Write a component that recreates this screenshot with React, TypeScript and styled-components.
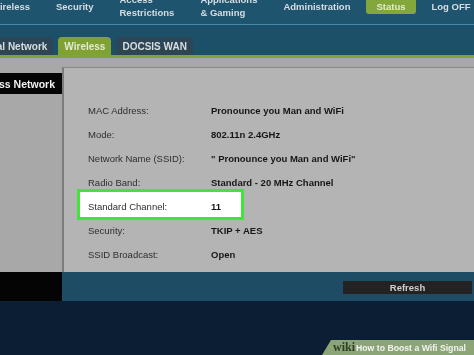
import styled, { createGlobalStyle } from "styled-components";

const GlobalStyle = createGlobalStyle`
  html, body {
    margin: 0;
    padding: 0;
    background: #0d1f34;
  }
  body {
    font-family: "Liberation Sans", Arial, sans-serif;
  }
`;

type NavItem = { lines: string[]; active?: boolean };

const navItems: NavItem[] = [
  { lines: ["Wireless"] },
  { lines: ["Security"] },
  { lines: ["Access", "Restrictions"] },
  { lines: ["Applications", "& Gaming"] },
  { lines: ["Administration"] },
  { lines: ["Status"], active: true },
  { lines: ["Log OFF"] },
];

const tabs = [
  { label: "Local Network" },
  { label: "Wireless", active: true },
  { label: "DOCSIS WAN" },
];

const rows = [
  { label: "MAC Address:", value: "Pronounce you Man and WiFi" },
  { label: "Mode:", value: "802.11n 2.4GHz" },
  { label: "Network Name (SSID):", value: "\" Pronounce you Man and WiFi\"" },
  { label: "Radio Band:", value: "Standard - 20 MHz Channel" },
  { label: "Standard Channel:", value: "11", highlight: true },
  { label: "Security:", value: "TKIP + AES" },
  { label: "SSID Broadcast:", value: "Open" },
];

export default function App() {
  return (
    <>
      <GlobalStyle />
      <Screen>
        <Header>
          <NavBar>
            <NavList>
              {navItems.map((item) => (
                <NavLink key={item.lines.join()} $active={item.active}>
                  {item.lines.map((l) => (
                    <span key={l}>{l}</span>
                  ))}
                </NavLink>
              ))}
            </NavList>
          </NavBar>
          <TabRow>
            {tabs.map((t) => (
              <Tab key={t.label} $active={t.active}>
                {t.label}
              </Tab>
            ))}
          </TabRow>
        </Header>
        <GreenRule />
        <Body>
          <Sidebar>
            <SideLabel>
              <span>Wireless Network</span>
            </SideLabel>
          </Sidebar>
          <Panel>
            {rows.map((r) =>
              r.highlight ? (
                <HighlightRow key={r.label}>
                  <Label>{r.label}</Label>
                  <Value>{r.value}</Value>
                </HighlightRow>
              ) : (
                <Row key={r.label}>
                  <Label>{r.label}</Label>
                  <Value>{r.value}</Value>
                </Row>
              )
            )}
          </Panel>
        </Body>
        <BottomBar>
          <BottomCorner />
          <ActionStrip>
            <RefreshButton>Refresh</RefreshButton>
          </ActionStrip>
        </BottomBar>
        <Footer />
        <Badge>
          <BadgeWiki>wiki</BadgeWiki>
          <BadgeTitle>How to Boost a Wifi Signal</BadgeTitle>
        </Badge>
      </Screen>
    </>
  );
}

const Screen = styled.div`
  position: relative;
  width: 474px;
  height: 355px;
  overflow: hidden;
  display: flex;
  flex-direction: column;
  background: #0d1f34;
  filter: blur(0.35px);
`;

const Header = styled.div`
  height: 55px;
  background: #1e546e;
  display: flex;
  flex-direction: column;
`;

const NavBar = styled.div`
  height: 25px;
  border-bottom: 1px solid #4a88a6;
  box-sizing: border-box;
  overflow: hidden;
`;

const NavList = styled.div`
  display: flex;
  align-items: center;
  height: 12px;
  gap: 26px;
  margin-left: -9px;
  white-space: nowrap;
`;

const NavLink = styled.div<{ $active?: boolean }>`
  display: flex;
  flex-direction: column;
  font-size: 9.5px;
  font-weight: bold;
  line-height: 13px;
  color: ${(p) => (p.$active ? "#e2ead0" : "#d6dde2")};
  ${(p) =>
    p.$active &&
    `
    background: #83a73a;
    padding: 0 10px;
    margin: 0 -10px;
    height: 15px;
    justify-content: center;
    align-self: flex-start;
    margin-top: -1px;
    border-radius: 0 0 3px 3px;
  `}
`;

const TabRow = styled.div`
  flex: 1;
  display: flex;
  align-items: flex-end;
  gap: 5px;
  margin-left: -27px;
  background: #1c5069;
`;

const Tab = styled.div<{ $active?: boolean }>`
  height: 18px;
  padding: 0 6px;
  display: flex;
  align-items: center;
  font-size: 10px;
  font-weight: bold;
  white-space: nowrap;
  border-radius: 4px 4px 0 0;
  background: ${(p) => (p.$active ? "#7fa233" : "#2c4657")};
  color: ${(p) => (p.$active ? "#e3ead3" : "#d8dde0")};
`;

const GreenRule = styled.div`
  height: 3px;
  background: #80a436;
`;

const Body = styled.div`
  height: 214px;
  display: flex;
  background: #a8a8a8;
`;

const Sidebar = styled.div`
  width: 62px;
  padding-top: 15px;
  flex-shrink: 0;
`;

const SideLabel = styled.div`
  height: 21px;
  background: #050505;
  display: flex;
  align-items: center;
  justify-content: flex-end;
  padding-right: 7px;
  overflow: hidden;
  white-space: nowrap;
  color: #f2f2f2;
  font-size: 10.5px;
  font-weight: bold;
`;

const Panel = styled.div`
  flex: 1;
  margin-top: 9px;
  background: #b4b4b4;
  border-top: 1px solid #8a8a8a;
  border-left: 2px solid #7c7c7c;
  padding: 30px 0 0 24px;
  display: flex;
  flex-direction: column;
`;

const Row = styled.div`
  height: 24px;
  display: flex;
  align-items: center;
  font-size: 9.5px;
`;

const HighlightRow = styled(Row)`
  box-sizing: border-box;
  width: 167px;
  height: 31px;
  margin: -5px 0 -2px -11px;
  padding: 3px 0 0 8px;
  border: 3px solid #3ee63a;
  background: #ffffff;
`;

const Label = styled.span`
  width: 123px;
  flex-shrink: 0;
  color: #2e2e2e;
`;

const Value = styled.span`
  font-weight: bold;
  color: #161616;
  white-space: nowrap;
`;

const BottomBar = styled.div`
  height: 29px;
  display: flex;
`;

const BottomCorner = styled.div`
  width: 62px;
  background: #040404;
`;

const ActionStrip = styled.div`
  flex: 1;
  background: #1e4c65;
  display: flex;
  justify-content: flex-end;
  align-items: flex-start;
  padding: 9px 2px 0 0;
`;

const RefreshButton = styled.div`
  width: 129px;
  height: 13px;
  background: #232323;
  color: #cfcfcf;
  font-size: 9.5px;
  font-weight: bold;
  display: flex;
  align-items: center;
  justify-content: center;
`;

const Footer = styled.div`
  flex: 1;
  background: #0c1e33;
`;

const Badge = styled.div`
  position: absolute;
  right: 0;
  bottom: 0;
  width: 152px;
  height: 15px;
  background: #8ca577;
  clip-path: polygon(9px 0, 100% 0, 100% 100%, 0 100%);
  display: flex;
  align-items: center;
  padding-left: 11px;
  box-sizing: border-box;
  gap: 1px;
  white-space: nowrap;
`;

const BadgeWiki = styled.span`
  font-family: "Liberation Serif", "Times New Roman", serif;
  font-weight: bold;
  font-size: 12px;
  color: #2f3d27;
`;

const BadgeTitle = styled.span`
  font-weight: bold;
  font-size: 8.7px;
  color: #f3f3f3;
`;
